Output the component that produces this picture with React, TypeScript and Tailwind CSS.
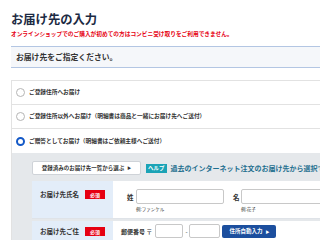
import React from 'react'

const font = { fontFamily: '"Noto Sans CJK JP", "Noto Sans", sans-serif' }

function Radio({ checked }: { checked?: boolean }) {
  if (checked) {
    return <span className="w-[9px] h-[9px] rounded-full border-[2.5px] border-[#1459c7] bg-white shrink-0" />
  }
  return <span className="w-[9px] h-[9px] rounded-full border border-[#b5b5b5] bg-white shrink-0" />
}

function Required() {
  return (
    <span className="bg-[#e60012] text-white text-[5px] font-bold w-[20px] h-[9px] flex items-center justify-center ml-[6px]">
      必須
    </span>
  )
}

export default function App() {
  const options = [
    { label: 'ご登録住所へお届け' },
    { label: 'ご登録住所以外へお届け（明細書は商品と一緒にお届け先へご送付）' },
    { label: 'ご贈答としてお届け（明細書はご依頼主様へご送付）', checked: true },
  ]

  return (
    <div className="w-[320px] h-[240px] overflow-hidden bg-white" style={font}>
      <div className="w-[440px] pl-[11px]">
        <h1 className="pt-[11px] text-[12.3px] leading-[16px] font-bold text-[#1c2a43]">お届け先の入力</h1>
        <p className="mt-[3px] text-[5.7px] leading-[8px] font-bold text-[#e60012] whitespace-nowrap">
          オンラインショップでのご購入が初めての方はコンビニ受け取りをご利用できません。
        </p>

        <div className="mt-[8px] h-[22px] border-y border-[#b3c6e3] bg-[#f5f7fa] flex items-center pl-[5px]">
          <span className="text-[7.8px] font-bold text-[#333]">お届け先をご指定ください。</span>
        </div>

        <div className="mt-[12px] border border-[#e2e2e2]">
          {options.map((o, i) => (
            <div
              key={i}
              className={`h-[24px] flex items-center pl-[4px] gap-[4px] ${i < 2 ? 'border-b border-[#e2e2e2]' : ''}`}
            >
              <Radio checked={o.checked} />
              <span className="text-[5.7px] font-bold text-[#333] whitespace-nowrap">{o.label}</span>
            </div>
          ))}

          <div className="bg-[#e5e8eb] pl-[20px] pt-[8px] pb-[10px]">
            <div className="flex items-center">
              <div className="h-[14px] w-[109px] bg-white border border-[#cfd3d8] rounded-[2px] flex items-center justify-center gap-[3px]">
                <span className="text-[5.5px] font-bold text-[#333] whitespace-nowrap">登録済みのお届け先一覧から選ぶ</span>
                <span className="text-[4px] text-[#333]">▶</span>
              </div>
              <span className="ml-[5px] h-[9px] px-[2px] bg-[#1ba3b6] text-white text-[5.5px] font-bold flex items-center">ヘルプ</span>
              <span className="ml-[4px] text-[7px] font-bold text-[#1f6f8f] whitespace-nowrap">
                過去のインターネット注文のお届け先から選択できます
              </span>
            </div>

            <div className="mt-[6px] bg-white">
              <div className="flex h-[38px] border-b border-[#dfe3e8]">
                <div className="w-[81px] bg-[#e3edf9] flex items-start pt-[9px] pl-[8px]">
                  <span className="text-[6.5px] font-bold text-[#333] whitespace-nowrap">お届け先氏名</span>
                  <Required />
                </div>
                <div className="flex-1 flex pt-[8px] pl-[14px]">
                  <span className="text-[6.5px] font-bold text-[#333] mt-[4px] w-[9px]">姓</span>
                  <div className="flex flex-col">
                    <div className="w-[88px] h-[15px] border border-[#c8c8c8] rounded-[2px]" />
                    <span className="text-[4.5px] text-[#333] mt-[2px]">例:ファンケル</span>
                  </div>
                  <span className="text-[6.5px] font-bold text-[#333] mt-[4px] ml-[9px] w-[8px]">名</span>
                  <div className="flex flex-col">
                    <div className="w-[100px] h-[15px] border border-[#c8c8c8] rounded-[2px]" />
                    <span className="text-[4.5px] text-[#333] mt-[2px]">例:花子</span>
                  </div>
                </div>
              </div>
              <div className="h-[2px] bg-[#e5e8eb]" />
              <div className="flex h-[30px]">
                <div className="w-[81px] bg-[#e3edf9] flex items-start pt-[6px] pl-[8px]">
                  <span className="text-[6.5px] font-bold text-[#333] whitespace-nowrap">お届け先ご住</span>
                  <Required />
                </div>
                <div className="flex-1 flex items-start pt-[3px] pl-[8px]">
                  <span className="text-[6px] font-bold text-[#333] mt-[3px] whitespace-nowrap">郵便番号 〒</span>
                  <div className="ml-[3px] w-[28px] h-[14px] border border-[#c8c8c8] rounded-[2px]" />
                  <span className="text-[6px] text-[#333] mx-[2px] mt-[3px]">-</span>
                  <div className="w-[31px] h-[14px] border border-[#c8c8c8] rounded-[2px]" />
                  <div className="ml-[2px] w-[54px] h-[13px] bg-[#1c4f9e] rounded-[2px] flex items-center justify-center gap-[3px] mt-[1px]">
                    <span className="text-[5.5px] font-bold text-white whitespace-nowrap">住所自動入力</span>
                    <span className="text-[4px] text-white">▶</span>
                  </div>
                </div>
              </div>
            </div>
          </div>
        </div>
      </div>
    </div>
  )
}
